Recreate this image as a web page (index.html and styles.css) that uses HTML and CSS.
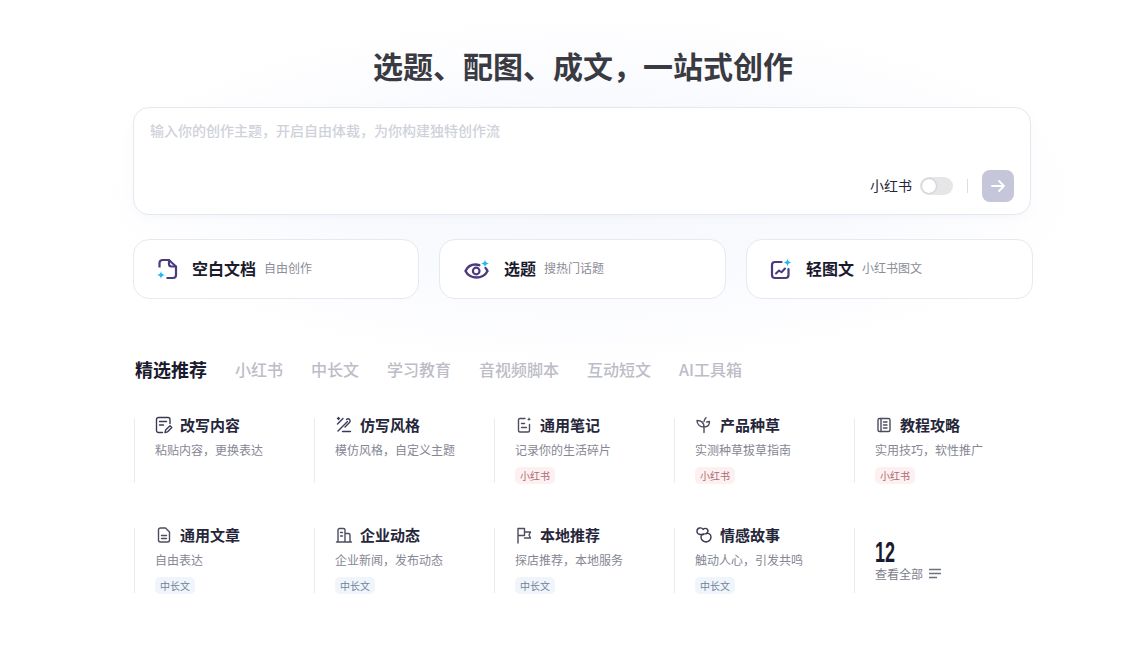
FILE: index.html
```html
<!DOCTYPE html>
<html lang="zh-CN">
<head>
<meta charset="utf-8">
<title>一站式创作</title>
<link rel="stylesheet" href="styles.css">
</head>
<body>
<main class="page">
  <h1 class="headline">选题、配图、成文，一站式创作</h1>

  <section class="composer">
    <p class="placeholder">输入你的创作主题，开启自由体裁，为你构建独特创作流</p>
    <div class="composer-foot">
      <span class="platform">小红书</span>
      <span class="toggle"><span class="knob"></span></span>
      <span class="divider"></span>
      <button class="send" type="button" aria-label="发送">
        <svg width="16" height="16" viewBox="0 0 16 16" fill="none" stroke="#fff" stroke-width="1.8" stroke-linecap="round" stroke-linejoin="round"><path d="M2 8h12M9 3l5 5-5 5"/></svg>
      </button>
    </div>
  </section>

  <section class="actions">
    <a class="action">
      <svg width="24" height="24" viewBox="0 0 24 24" fill="none"><path d="M4.500 10.500V6a3 3 0 0 1 3-3H14v4a2.500 2.500 0 0 0 2.500 2.500H21V18a3 3 0 0 1-3 3h-6.500" stroke="#4b3a7d" stroke-width="2.200" stroke-linejoin="round"/><path d="M14 3l7 6.500" stroke="#4b3a7d" stroke-width="2"/><path d="M6 14c.4 2.700 1.300 3.600 4 4-2.700.4-3.600 1.300-4 4-.4-2.700-1.300-3.600-4-4 2.700-.4 3.600-1.300 4-4z" fill="#1fb6f2"/></svg>
      <span class="action-title">空白文档</span><span class="action-sub">自由创作</span>
    </a>
    <a class="action">
      <svg width="30" height="24" viewBox="0 0 30 24" fill="none"><path d="M4.500 14C6.500 9.500 10.500 7.500 14.500 7.500c1.300 0 2.600.2 3.800.7M24.500 11c.9.900 1.500 1.900 2 3-2 4.500-7 6.500-11 6.500s-9-2-11-6.500" stroke="#4b3a7d" stroke-width="2.400" stroke-linecap="round"/><circle cx="15.200" cy="14" r="3.300" stroke="#4b3a7d" stroke-width="2.200"/><path d="M24 2.500c.4 2.700 1.300 3.600 4 4-2.700.4-3.600 1.300-4 4-.4-2.700-1.300-3.600-4-4 2.700-.4 3.600-1.300 4-4z" fill="#1fb6f2"/></svg>
      <span class="action-title">选题</span><span class="action-sub">搜热门话题</span>
    </a>
    <a class="action">
      <svg width="25" height="24" viewBox="0 0 25 24" fill="none"><path d="M13.500 5H7a3 3 0 0 0-3 3v10a3 3 0 0 0 3 3h10.500a3 3 0 0 0 3-3v-6" stroke="#4b3a7d" stroke-width="2.200" stroke-linecap="round"/><path d="M8 16.500l3-3 2.500 1.800 3.500-3.800" stroke="#4b3a7d" stroke-width="2" stroke-linecap="round" stroke-linejoin="round"/><path d="M19.500 1.500c.4 2.700 1.300 3.600 4 4-2.700.4-3.600 1.300-4 4-.4-2.700-1.300-3.600-4-4 2.700-.4 3.600-1.300 4-4z" fill="#1fb6f2"/></svg>
      <span class="action-title">轻图文</span><span class="action-sub">小红书图文</span>
    </a>
  </section>

  <nav class="tabs">
    <span class="tab tab-active">精选推荐</span>
    <span class="tab">小红书</span>
    <span class="tab">中长文</span>
    <span class="tab">学习教育</span>
    <span class="tab">音视频脚本</span>
    <span class="tab">互动短文</span>
    <span class="tab">AI工具箱</span>
  </nav>

  <section class="grid">
    <article class="item">
      <h3 class="item-title"><svg class="dark" width="18" height="18" viewBox="0 0 18 18"><path d="M7.500 16.500H3.500a2 2 0 0 1-2-2v-11a2 2 0 0 1 2-2h9.500a2 2 0 0 1 2 2V7.500M4.500 5.500h7M4.500 9h4"/><path d="M10 16.500l.6-2.400 4.400-4.300 1.800 1.800-4.400 4.300z"/></svg>改写内容</h3>
      <p class="item-desc">粘贴内容，更换表达</p>
    </article>
    <article class="item">
      <h3 class="item-title"><svg class="dark" width="18" height="18" viewBox="0 0 18 18"><path d="M2.500 8 8 2.500M3 15l9.500-9.500M7.500 15.500h8M10 11l4.500-4.500a2.100 2.100 0 0 0-3-3M2.500 2.500h2M3.500 1.500v2"/></svg>仿写风格</h3>
      <p class="item-desc">模仿风格，自定义主题</p>
    </article>
    <article class="item">
      <h3 class="item-title"><svg class="grey" width="18" height="18" viewBox="0 0 18 18"><path d="M10 2.500H5A1.500 1.500 0 0 0 3.500 4v10.500A1.500 1.500 0 0 0 5 16h8a1.500 1.500 0 0 0 1.500-1.500V8.500M6.500 7.500h3M6.500 11.500h5"/><path class="sparkle" d="M14 1c.2 1.500.8 2 2.300 2.300-1.500.3-2.100.8-2.300 2.200-.2-1.400-.8-1.900-2.300-2.200C13.200 3 13.800 2.500 14 1z"/></svg>通用笔记</h3>
      <p class="item-desc">记录你的生活碎片</p>
      <span class="tag tag-red">小红书</span>
    </article>
    <article class="item">
      <h3 class="item-title"><svg class="grey" width="18" height="18" viewBox="0 0 18 18"><path d="M9 16.500V11M9 11C5 11 2 8.500 2 4.500c3.500 0 7 1.500 7 6.500M9 11c3 0 5.500-1.800 5.500-5.500-1 0-2 .2-3 .6M9 5.500c.2-1.300 1-2.700 2-3.700"/></svg>产品种草</h3>
      <p class="item-desc">实测种草拔草指南</p>
      <span class="tag tag-red">小红书</span>
    </article>
    <article class="item">
      <h3 class="item-title"><svg class="grey" width="18" height="18" viewBox="0 0 18 18"><rect x="3" y="2.500" width="12" height="13" rx="1.500"/><path d="M6 2.500v13M8.500 6h3.500M8.500 9h3.500M8.500 12h3.500"/></svg>教程攻略</h3>
      <p class="item-desc">实用技巧，软性推广</p>
      <span class="tag tag-red">小红书</span>
    </article>

    <article class="item">
      <h3 class="item-title"><svg class="grey" width="18" height="18" viewBox="0 0 18 18"><path d="M10.500 2H5.500A2 2 0 0 0 3.500 4v10a2 2 0 0 0 2 2h7a2 2 0 0 0 2-2V6zM6.500 9.500h5M6.500 12.500h5"/></svg>通用文章</h3>
      <p class="item-desc">自由表达</p>
      <span class="tag tag-blue">中长文</span>
    </article>
    <article class="item">
      <h3 class="item-title"><svg class="grey" width="18" height="18" viewBox="0 0 18 18"><path d="M3 16V4a1.500 1.500 0 0 1 1.500-1.500h4A1.500 1.500 0 0 1 10 4v12M10 7.500h3.500A1.500 1.500 0 0 1 15 9v7M1.500 16h15M5.500 6.500h2M5.500 10h2"/></svg>企业动态</h3>
      <p class="item-desc">企业新闻，发布动态</p>
      <span class="tag tag-blue">中长文</span>
    </article>
    <article class="item">
      <h3 class="item-title"><svg class="grey" width="18" height="18" viewBox="0 0 18 18"><path d="M3 17V2.500h6.500v3.500h6l-1.500 3 1.500 3H9.500M9.500 6v3.500H3"/></svg>本地推荐</h3>
      <p class="item-desc">探店推荐，本地服务</p>
      <span class="tag tag-blue">中长文</span>
    </article>
    <article class="item">
      <h3 class="item-title"><svg class="dark" width="18" height="18" viewBox="0 0 18 18"><path d="M8.500 8.500H5A3.300 3.300 0 0 1 4.500 2c1.600-.3 3 .3 3.700 1.500C9.200 2 11.500 2 12.500 3.500c.8 1.200.3 3-1 4"/><path d="M10 8c2.500-1.500 6-.5 6 2.800 0 2.500-2 4.700-5 5.200-3-.6-5-2.700-5-5 0-1.700 1.500-3 3-3"/></svg>情感故事</h3>
      <p class="item-desc">触动人心，引发共鸣</p>
      <span class="tag tag-blue">中长文</span>
    </article>
    <article class="item item-more">
      <strong class="count">12</strong>
      <span class="more">查看全部<svg width="14" height="12" viewBox="0 0 14 12" fill="none" stroke="#6d7280" stroke-width="1.400"><path d="M1 1.500h12M1 5.500h12M1 9.500h8"/></svg></span>
    </article>
  </section>
</main>
</body>
</html>
```

FILE: styles.css
```css
* { box-sizing: border-box; }

html, body { margin: 0; padding: 0; }

body {
  height: 668px;
  overflow: hidden;
  font-family: "Noto Sans CJK SC", "Noto Sans", "Liberation Sans", sans-serif;
  color: #1c1c33;
  background:
    radial-gradient(ellipse 510px 180px at 590px 190px, #f6f8fd 0%, #f9fafe 50%, #ffffff 100%),
    #ffffff;
}

.page {
  width: 900px;
  margin-left: 133px;
  padding-top: 45px;
}

.headline {
  margin: 0;
  height: 40px;
  line-height: 40px;
  font-size: 30px;
  font-weight: 700;
  color: #3a3a42;
  text-align: center;
}

.composer {
  width: 898px;
  height: 108px;
  margin-top: 22px;
  padding: 12px 16px 12px 16px;
  display: flex;
  flex-direction: column;
  justify-content: space-between;
  background: #fff;
  border: 1px solid #e6e8ee;
  border-radius: 16px;
  box-shadow: 0 3px 10px rgba(120, 130, 180, 0.05);
}

.placeholder {
  margin: 0;
  font-size: 14px;
  line-height: 20px;
  font-weight: 500;
  color: #cfd2da;
}

.composer-foot {
  display: flex;
  align-items: center;
  justify-content: flex-end;
}

.platform {
  padding-bottom: 2px;
  font-size: 14px;
  line-height: 20px;
  color: #26263a;
}

.toggle {
  width: 33px;
  height: 18px;
  margin-left: 8px;
  padding: 2px;
  display: flex;
  background: #e6e6e8;
  border-radius: 9px;
}

.knob {
  width: 14px;
  height: 14px;
  background: #fff;
  border-radius: 50%;
  box-shadow: 0 0 2px rgba(0, 0, 0, 0.3);
}

.divider {
  width: 1px;
  height: 14px;
  margin: 0 14px;
  background: #dcdde2;
}

.send {
  width: 32px;
  height: 32px;
  padding: 0;
  display: flex;
  align-items: center;
  justify-content: center;
  background: #c6c6da;
  border: 0;
  border-radius: 8px;
}

.actions {
  margin-top: 24px;
  display: grid;
  grid-template-columns: 286px 287px 287px;
  column-gap: 20px;
}

.action {
  height: 60px;
  padding-left: 21px;
  display: flex;
  align-items: center;
  background: #fff;
  border: 1px solid #e8e9ee;
  border-radius: 16px;
}

.action-title {
  margin-left: 13px;
  padding-bottom: 2px;
  font-size: 16px;
  line-height: 22px;
  font-weight: 700;
  color: #1a1a2e;
}

.action-sub {
  margin-left: 8px;
  padding-bottom: 2px;
  font-size: 12px;
  line-height: 18px;
  color: #8b8c99;
}

.tabs {
  margin-top: 57px;
  margin-left: 2px;
  height: 26px;
  display: flex;
  align-items: center;
  gap: 28px;
}

.tab {
  font-size: 16px;
  line-height: 26px;
  font-weight: 500;
  color: #bcbdc6;
}

.tab-active {
  font-size: 18px;
  font-weight: 700;
  color: #1a1a2e;
}

.grid {
  margin-top: 36px;
  margin-left: 1px;
  display: grid;
  grid-template-columns: repeat(5, 180px);
  grid-auto-rows: 65px;
  row-gap: 45px;
}

.item {
  height: 65px;
  padding-left: 20px;
  border-left: 1px solid #e9ebf1;
}

.item-title {
  margin: 0;
  height: 14px;
  display: flex;
  align-items: center;
  gap: 7px;
  font-size: 15px;
  line-height: 14px;
  font-weight: 700;
  color: #26263a;
}

.item-title svg {
  flex: none;
  fill: none;
  stroke-width: 1.400;
  stroke-linecap: round;
  stroke-linejoin: round;
}

.item-title .dark { stroke: #3a3a58; }
.item-title .grey { stroke: #4c4d5e; }
.item-title .sparkle { fill: #4c4d5e; stroke: none; }

.item-desc {
  margin: 9px 0 0;
  font-size: 12px;
  line-height: 17px;
  color: #868794;
}

.tag {
  display: inline-block;
  margin-top: 9px;
  padding: 0 5px;
  height: 17px;
  font-size: 10px;
  line-height: 17px;
  border-radius: 5px;
}

.tag-red { color: #ad6b74; background: #fdf0f0; }
.tag-blue { color: #71829a; background: #f0f5fc; }

.item-more {
  display: flex;
  flex-direction: column;
  align-items: flex-start;
}

.count {
  margin-top: 10px;
  display: block;
  height: 28px;
  font-family: "Liberation Sans", sans-serif;
  font-size: 30px;
  line-height: 28px;
  font-weight: 700;
  color: #1a1a2e;
  transform: scaleX(0.6);
  transform-origin: left center;
}

.more {
  margin-top: -1px;
  display: flex;
  align-items: center;
  gap: 5px;
  font-size: 12px;
  line-height: 17px;
  color: #7d7e8b;
}
```
